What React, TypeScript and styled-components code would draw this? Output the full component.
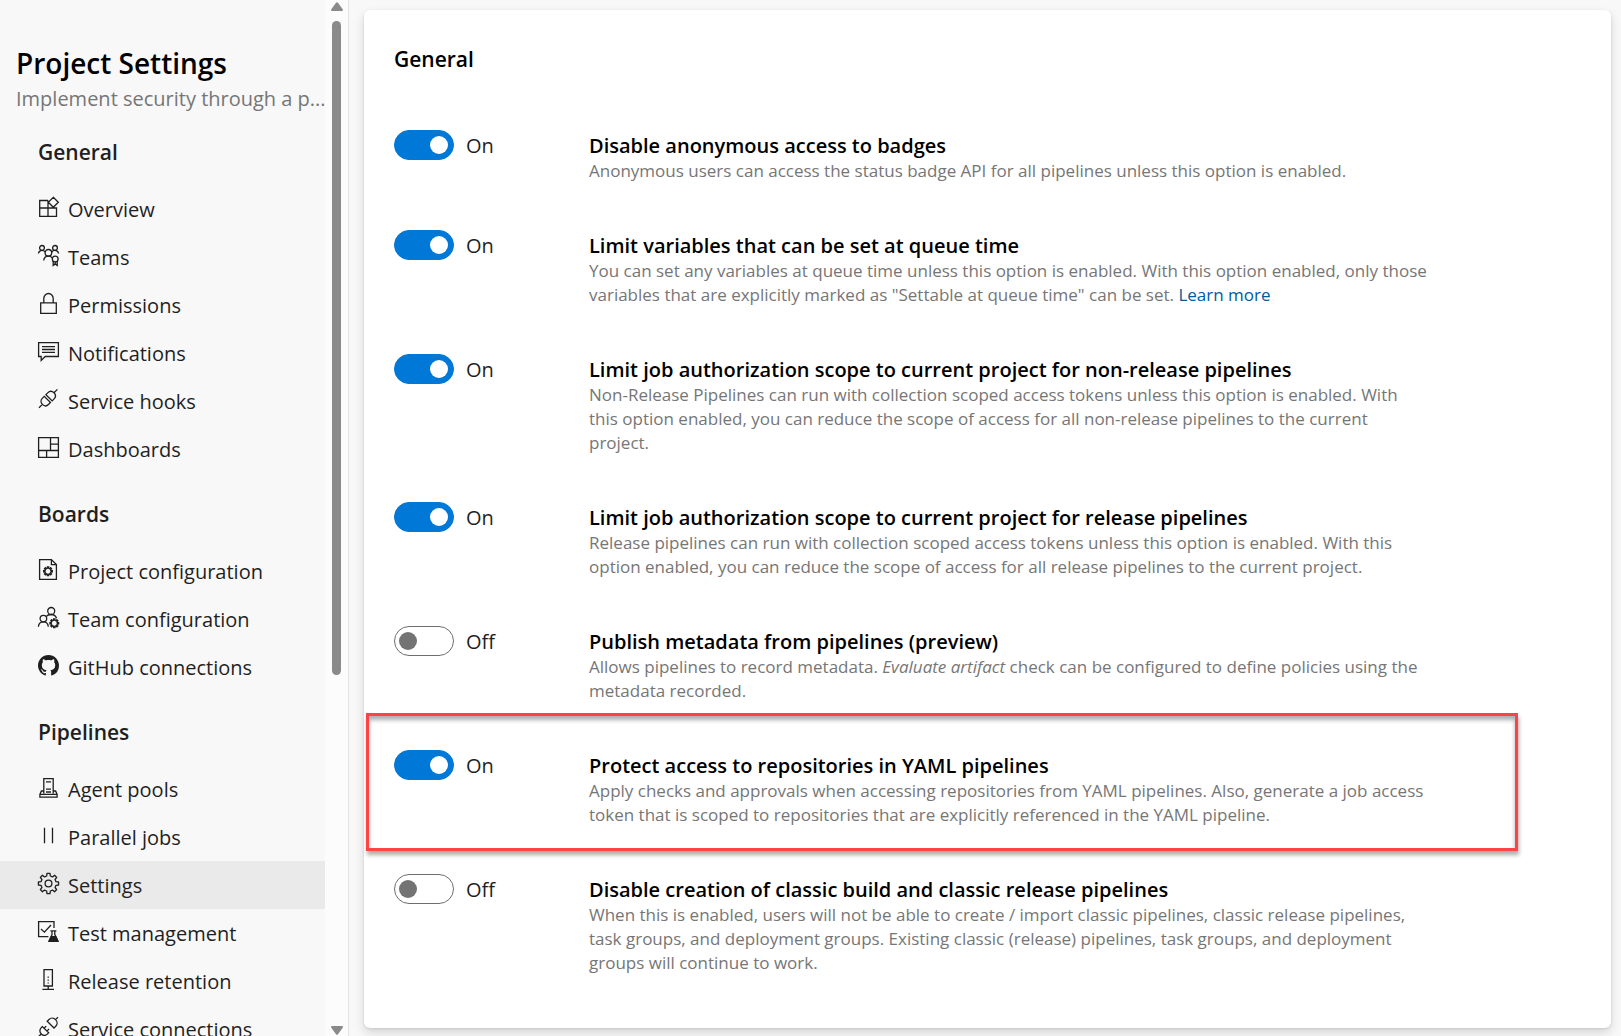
import React, { useState } from "react";
import styled, { createGlobalStyle } from "styled-components";

const GlobalStyle = createGlobalStyle`
  *, *::before, *::after { box-sizing: border-box; }
  body {
    margin: 0;
    background: #f8f8f8;
    color: #1f1f1f;
    font-family: "Open Sans", "Noto Sans", sans-serif;
    font-size: 20px;
  }
  h1, h2, h3, p, ul { margin: 0; padding: 0; }
`;

const Page = styled.div`
  display: flex;
  height: 100vh;
  overflow: hidden;
`;

const Sidebar = styled.aside`
  flex: 0 0 349px;
  min-width: 0;
  display: flex;
  border-right: 1px solid #e3e3e3;
`;

const SidebarContent = styled.div`
  flex: 1;
  min-width: 0;
  padding-top: 41px;
`;

const ProjectTitle = styled.h1`
  padding-left: 16px;
  font-size: 28px;
  font-weight: 600;
  line-height: 44px;
  color: #000;
`;

const ProjectName = styled.p`
  padding-left: 16px;
  line-height: 28px;
  color: #767676;
  white-space: nowrap;
`;

const Nav = styled.nav`
  margin-top: -2px;
`;

const NavSection = styled.section`
  padding-top: 17px;
`;

const NavHeading = styled.h2`
  margin-bottom: 9px;
  padding-left: 38px;
  font-size: 21px;
  font-weight: 600;
  line-height: 48px;
`;

const NavList = styled.ul`
  list-style: none;
`;

const NavLink = styled.a<{ $active?: boolean }>`
  display: flex;
  align-items: center;
  gap: 9px;
  height: 48px;
  padding-left: 38px;
  color: inherit;
  text-decoration: none;
  white-space: nowrap;
  background: ${(p) => (p.$active ? "#eaeaea" : "transparent")};
`;

const Glyph = styled.svg`
  flex: none;
  width: 21px;
  height: 21px;
  overflow: visible;
  margin-bottom: 3px;
  fill: none;
  stroke: currentColor;
  stroke-width: 1.3;
`;

const Scrollbar = styled.div`
  flex: 0 0 23px;
  display: flex;
  flex-direction: column;
  align-items: center;
  justify-content: space-between;
  padding: 2px 0 1px;
  background: #fcfcfc;
`;

const ScrollArrow = styled.svg`
  width: 12px;
  height: 9px;
  fill: #8a8a8a;
`;

const ScrollTrack = styled.div`
  flex: 1;
  width: 9px;
  padding: 10px 0;
`;

const ScrollThumb = styled.div`
  height: 65.7%;
  border-radius: 5px;
  background: #8a8a8a;
`;

const Main = styled.main`
  flex: 1;
  min-width: 0;
  padding: 10px 10px 8px 15px;
`;

const Card = styled.section`
  padding: 34px 30px 53px;
  border-radius: 6px;
  background: #fff;
  box-shadow: 0 5px 11px rgba(0, 0, 0, 0.13), 0 1px 3px rgba(0, 0, 0, 0.11);
`;

const CardHeading = styled.h2`
  margin-bottom: 56px;
  font-size: 21px;
  font-weight: 600;
  line-height: 30px;
  color: #000;
`;

const SettingList = styled.div`
  display: flex;
  flex-direction: column;
  gap: 47px;
`;

const SettingRow = styled.div`
  position: relative;
  display: grid;
  grid-template-columns: 195px minmax(0, 840px);
  align-items: start;
`;

const Highlight = styled.div`
  position: absolute;
  inset: -37px 63px -24px -28px;
  border: 3px solid #fd4343;
  box-shadow: 1px 4px 4px rgba(0, 0, 0, 0.32), inset 0 4px 4px rgba(0, 0, 0, 0.32);
  pointer-events: none;
`;

const ToggleField = styled.div`
  display: flex;
  align-items: center;
  gap: 12px;
  height: 30px;
`;

const ToggleState = styled.span`
  padding-top: 2px;
  line-height: 28px;
`;

const Switch = styled.input`
  appearance: none;
  display: flex;
  align-items: center;
  width: 60px;
  height: 30px;
  margin: 0;
  padding: 0 5px 0 4px;
  border: 1px solid #6e6e6e;
  border-radius: 15px;
  background: #fff;
  cursor: pointer;

  &::before {
    content: "";
    width: 18px;
    height: 18px;
    border-radius: 50%;
    background: #737373;
  }

  &:checked {
    justify-content: flex-end;
    border-color: #0078d7;
    background: #0078d7;
  }

  &:checked::before {
    background: #fff;
  }
`;

const SettingTitle = styled.label`
  display: block;
  padding-top: 3px;
  font-weight: 600;
  line-height: 26px;
  color: #000;
`;

const SettingDescription = styled.p`
  font-size: 17px;
  line-height: 24px;
  color: #767676;
`;

const TextLink = styled.a`
  color: #005a9e;
  text-decoration: none;
`;

/* Outline of a cog: each tooth is a flat top joined to the rim by short flanks. */
function cog(cx: number, cy: number, outer: number, inner: number, teeth = 8) {
  const points: string[] = [];
  const step = (Math.PI * 2) / teeth;
  for (let i = 0; i < teeth; i++) {
    const a = i * step;
    [
      [inner, -0.3],
      [outer, -0.19],
      [outer, 0.19],
      [inner, 0.3],
    ].forEach(([r, t]) => {
      const angle = a + t * step;
      points.push(`${(cx + r * Math.cos(angle)).toFixed(2)} ${(cy + r * Math.sin(angle)).toFixed(2)}`);
    });
  }
  return `M${points.join("L")}Z`;
}

const icons: Record<string, React.ReactNode> = {
  overview: (
    <path d="M10 3.5H1.7V19.3H18.5V11H1.7M10 3.5V19.3M15.3 .3L20.3 5.3L15.3 10.3L10.3 5.3Z" />
  ),
  teams: (
    <>
      <circle cx="4" cy="2.9" r="2.4" />
      <circle cx="17" cy="2.9" r="2.4" />
      <circle cx="10.4" cy="7.8" r="3.3" />
      <circle cx="17.2" cy="14" r="2.9" />
      <path d="M.4 8.5C.8 6.2 2.2 5.3 4 5.3C5.4 5.3 6.5 6 7.2 7.1M13.6 7.1C14.3 6 15.5 5.3 17 5.3C18.8 5.3 20.2 6.2 20.6 8.5M5.7 15.5C6 12.6 8 11.1 10.4 11.1C12 11.1 13.3 11.7 14.2 12.8M15.2 16V20.4L17.2 19L19.2 20.4V16" />
      <path d="M17.2 17V19" />
    </>
  ),
  lock: <path d="M2.7 9.8H18.3V20.4H2.7ZM5.8 9.8V5.4A4.7 4.9 0 0 1 15.2 5.4V9.8" />,
  message: (
    <>
      <path d="M.6 1.6H20.4V15.5H7.2L3.2 19.4V15.5H.6Z" />
      <path d="M4 5.6H17M4 8.5H17M4 11.4H17" />
    </>
  ),
  plug: (
    <g transform="rotate(-45 10.2 9.6)">
      <path d="M-2.8 9.6H2M18.4 9.6H23.2M9 5.2H6.5C3.5 5.2 2 7.2 2 9.6S3.5 14 6.5 14H9ZM11.4 5.2H13.9C16.9 5.2 18.4 7.2 18.4 9.6S16.9 14 13.9 14H11.4Z" />
    </g>
  ),
  dashboard: <path d="M.6 .6H20.4V20.4H.6ZM12.5 .6V13.5M.6 13.5H20.4M12.5 7.2H20.4M8.6 13.5V20.4" />,
  projectConfig: (
    <>
      <path d="M1.6 .6H13.4L18.4 5.6V20.4H1.6ZM13.4 .6V5.6H18.4" />
      <path d={cog(10, 12.3, 4.4, 3)} />
    </>
  ),
  teamConfig: (
    <>
      <circle cx="13.2" cy="4" r="3.5" />
      <circle cx="5.4" cy="11.6" r="3.3" />
      <path d="M.4 19.8C.6 16.6 2.6 14.9 5.4 14.9C8.2 14.9 10.1 16.6 10.3 19.8M8.3 9.3C9.3 8.1 11 7.5 13.2 7.5C15.8 7.5 17.7 8.8 18.6 11.3" />
      <path d={cog(16.3, 16.3, 4.4, 3)} />
    </>
  ),
  github: (
    <path
      transform="scale(1.3125)"
      fill="currentColor"
      stroke="none"
      d="M8 0C3.58 0 0 3.58 0 8c0 3.54 2.29 6.53 5.47 7.59.4.07.55-.17.55-.38 0-.19-.01-.82-.01-1.49-2.01.37-2.53-.49-2.69-.94-.09-.23-.48-.94-.82-1.13-.28-.15-.68-.52-.01-.53.63-.01 1.08.58 1.23.82.72 1.21 1.87.87 2.33.66.07-.52.28-.87.51-1.07-1.78-.2-3.64-.89-3.64-3.95 0-.87.31-1.59.82-2.15-.08-.2-.36-1.02.08-2.12 0 0 .67-.21 2.2.82.64-.18 1.32-.27 2-.27.68 0 1.36.09 2 .27 1.53-1.04 2.2-.82 2.2-.82.44 1.1.16 1.92.08 2.12.51.56.82 1.27.82 2.15 0 3.07-1.87 3.75-3.65 3.95.29.25.54.73.54 1.48 0 1.07-.01 1.93-.01 2.2 0 .21.15.46.55.38A8.013 8.013 0 0 0 16 8c0-4.42-3.58-8-8-8z"
    />
  ),
  server: (
    <path d="M5.8 16.5V1.6H15.2V16.5M8 4.8H13M8 12.2H13M8 15H13M5.8 14H3.4L1.9 17.4V20.2H19.1V17.4L17.6 14H15.2M1.9 17.4H19.1" />
  ),
  parallel: <path d="M6.5 2.7V18.3M14.5 2.7V18.3" />,
  gear: (
    <>
      <path d={cog(10.5, 10.5, 10.2, 7.7)} strokeLinejoin="round" />
      <circle cx="10.5" cy="10.5" r="3.4" />
    </>
  ),
  test: (
    <>
      <path d="M16 7V.6H.6V15.6H10.4M3 8L6.4 11.2L13 4M12.4 9.8H18.4M14 9.8V13.6L11.2 19.8H19.8L16.8 13.6V9.8" />
      <path d="M13.2 15.6H17.8L20 20.4H11Z" fill="currentColor" />
    </>
  ),
  retention: (
    <>
      <path d="M6 .6H14.4V17H6ZM10.2 17V20.3M4.4 20.3H16" />
      <path d="M10.2 7.5V14.5" strokeDasharray="1.3 1.7" />
    </>
  ),
  connection: (
    <g transform="rotate(-45 10.2 10)">
      <path d="M-3 10H.4M6.4 5.6H4.9C2 5.6 .4 7.6 .4 10S2 14.4 4.9 14.4H6.4ZM6.4 8H9.4M6.4 12H9.4M20.6 10H24M13.6 5.2H16.1C19 5.2 20.6 7.6 20.6 10S19 14.8 16.1 14.8H13.6Z" />
    </g>
  ),
};

const sections = [
  {
    heading: "General",
    items: [
      { icon: "overview", text: "Overview" },
      { icon: "teams", text: "Teams" },
      { icon: "lock", text: "Permissions" },
      { icon: "message", text: "Notifications" },
      { icon: "plug", text: "Service hooks" },
      { icon: "dashboard", text: "Dashboards" },
    ],
  },
  {
    heading: "Boards",
    items: [
      { icon: "projectConfig", text: "Project configuration" },
      { icon: "teamConfig", text: "Team configuration" },
      { icon: "github", text: "GitHub connections" },
    ],
  },
  {
    heading: "Pipelines",
    items: [
      { icon: "server", text: "Agent pools" },
      { icon: "parallel", text: "Parallel jobs" },
      { icon: "gear", text: "Settings" },
      { icon: "test", text: "Test management" },
      { icon: "retention", text: "Release retention" },
      { icon: "connection", text: "Service connections" },
    ],
  },
];

interface Setting {
  id: string;
  title: string;
  on: boolean;
  highlighted?: boolean;
  description: React.ReactNode;
}

const settings: Setting[] = [
  {
    id: "badges",
    title: "Disable anonymous access to badges",
    on: true,
    description: "Anonymous users can access the status badge API for all pipelines unless this option is enabled.",
  },
  {
    id: "queue-time",
    title: "Limit variables that can be set at queue time",
    on: true,
    description: (
      <>
        You can set any variables at queue time unless this option is enabled. With this option enabled, only those
        variables that are explicitly marked as "Settable at queue time" can be set.{" "}
        <TextLink href="#learn-more">Learn more</TextLink>
      </>
    ),
  },
  {
    id: "non-release-scope",
    title: "Limit job authorization scope to current project for non-release pipelines",
    on: true,
    description:
      "Non-Release Pipelines can run with collection scoped access tokens unless this option is enabled. With this option enabled, you can reduce the scope of access for all non-release pipelines to the current project.",
  },
  {
    id: "release-scope",
    title: "Limit job authorization scope to current project for release pipelines",
    on: true,
    description:
      "Release pipelines can run with collection scoped access tokens unless this option is enabled. With this option enabled, you can reduce the scope of access for all release pipelines to the current project.",
  },
  {
    id: "metadata",
    title: "Publish metadata from pipelines (preview)",
    on: false,
    description: (
      <>
        Allows pipelines to record metadata. <em>Evaluate artifact</em> check can be configured to define policies using
        the metadata recorded.
      </>
    ),
  },
  {
    id: "yaml-repositories",
    title: "Protect access to repositories in YAML pipelines",
    on: true,
    highlighted: true,
    description:
      "Apply checks and approvals when accessing repositories from YAML pipelines. Also, generate a job access token that is scoped to repositories that are explicitly referenced in the YAML pipeline.",
  },
  {
    id: "classic",
    title: "Disable creation of classic build and classic release pipelines",
    on: false,
    description:
      "When this is enabled, users will not be able to create / import classic pipelines, classic release pipelines, task groups, and deployment groups. Existing classic (release) pipelines, task groups, and deployment groups will continue to work.",
  },
];

function SettingItem({ setting }: { setting: Setting }) {
  const [on, setOn] = useState(setting.on);
  return (
    <SettingRow>
      <ToggleField>
        <Switch
          type="checkbox"
          role="switch"
          id={setting.id}
          checked={on}
          onChange={(e) => setOn(e.target.checked)}
        />
        <ToggleState>{on ? "On" : "Off"}</ToggleState>
      </ToggleField>
      <div>
        <SettingTitle htmlFor={setting.id}>{setting.title}</SettingTitle>
        <SettingDescription>{setting.description}</SettingDescription>
      </div>
      {setting.highlighted && <Highlight />}
    </SettingRow>
  );
}

export default function App() {
  return (
    <>
      <GlobalStyle />
      <Page>
        <Sidebar>
          <SidebarContent>
            <ProjectTitle>Project Settings</ProjectTitle>
            <ProjectName>Implement security through a p...</ProjectName>
            <Nav>
              {sections.map((section) => (
                <NavSection key={section.heading}>
                  <NavHeading>{section.heading}</NavHeading>
                  <NavList>
                    {section.items.map((item) => (
                      <li key={item.text}>
                        <NavLink href="#" $active={item.text === "Settings"}>
                          <Glyph viewBox="0 0 21 21" aria-hidden="true">
                            {icons[item.icon]}
                          </Glyph>
                          {item.text}
                        </NavLink>
                      </li>
                    ))}
                  </NavList>
                </NavSection>
              ))}
            </Nav>
          </SidebarContent>
          <Scrollbar aria-hidden="true">
            <ScrollArrow viewBox="0 0 12 9">
              <path d="M5 .8Q6 -.4 7 .8L11.7 7.2Q12.4 9 11 9H1Q-.4 9 .3 7.2Z" />
            </ScrollArrow>
            <ScrollTrack>
              <ScrollThumb />
            </ScrollTrack>
            <ScrollArrow viewBox="0 0 12 9">
              <path d="M5 8.2Q6 9.4 7 8.2L11.7 1.8Q12.4 0 11 0H1Q-.4 0 .3 1.8Z" />
            </ScrollArrow>
          </Scrollbar>
        </Sidebar>
        <Main>
          <Card>
            <CardHeading>General</CardHeading>
            <SettingList>
              {settings.map((setting) => (
                <SettingItem key={setting.id} setting={setting} />
              ))}
            </SettingList>
          </Card>
        </Main>
      </Page>
    </>
  );
}
